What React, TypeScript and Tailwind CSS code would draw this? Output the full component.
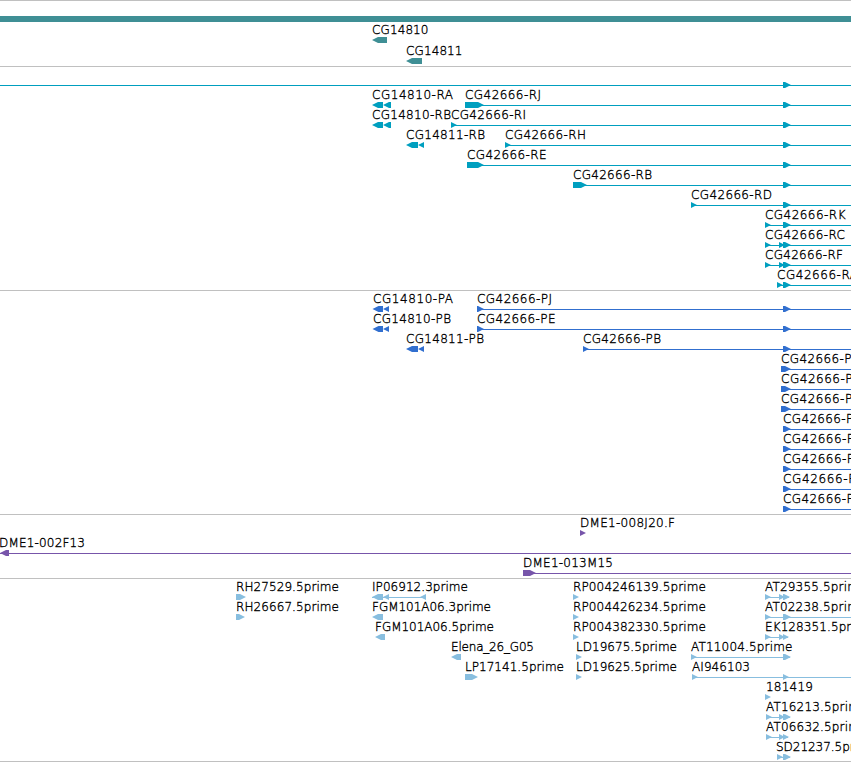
type Label = { text: string; x: number; end: number };
type Arrow = { from: number; to: number; left?: boolean };
type Row = { labels?: Label[]; lines?: [number, number][]; arrows?: Arrow[] };

const WIDTH = 851;

const lab = (text: string, x: number, end: number): Label => ({ text, x, end });
const r = (from: number, to: number): Arrow => ({ from, to });
const l = (from: number, to: number): Arrow => ({ from, to, left: true });

const EXON = r(783, 791);

const transcripts: Row[] = [
  { lines: [[0, WIDTH]], arrows: [EXON] },
  {
    labels: [lab("CG14810-RA", 372, 453), lab("CG42666-RJ", 465, 541)],
    lines: [[465, WIDTH]],
    arrows: [l(372, 383), l(383, 391), r(465, 484), EXON],
  },
  {
    labels: [lab("CG14810-RB", 372, 451), lab("CG42666-RI", 451, 526)],
    lines: [[451, WIDTH]],
    arrows: [l(372, 383), l(383, 391), r(451, 457), EXON],
  },
  {
    labels: [lab("CG14811-RB", 406, 485), lab("CG42666-RH", 505, 586)],
    lines: [[505, WIDTH]],
    arrows: [l(406, 418), l(418, 424), r(505, 511), EXON],
  },
  { labels: [lab("CG42666-RE", 467, 546.5)], lines: [[467, WIDTH]], arrows: [r(467, 484), EXON] },
  { labels: [lab("CG42666-RB", 573, 652)], lines: [[573, WIDTH]], arrows: [r(573, 587), EXON] },
  { labels: [lab("CG42666-RD", 691, 772)], lines: [[691, WIDTH]], arrows: [r(691, 697), EXON] },
  { labels: [lab("CG42666-RK", 765, 845.5)], lines: [[765, WIDTH]], arrows: [r(765, 771), EXON] },
  { labels: [lab("CG42666-RC", 765, 845)], lines: [[765, WIDTH]], arrows: [r(765, 771), r(779, 785), EXON] },
  { labels: [lab("CG42666-RF", 765, 843)], lines: [[765, WIDTH]], arrows: [r(765, 771), r(779, 785), EXON] },
  { labels: [lab("CG42666-RA", 777, 858)], lines: [[777, WIDTH]], arrows: [r(777, 783), EXON] },
];

const proteins: Row[] = [
  {
    labels: [lab("CG14810-PA", 373, 453), lab("CG42666-PJ", 477, 552)],
    lines: [[477, WIDTH]],
    arrows: [l(372.5, 383), l(383, 389), r(477, 484), EXON],
  },
  {
    labels: [lab("CG14810-PB", 373, 451), lab("CG42666-PE", 477, 555.5)],
    lines: [[477, WIDTH]],
    arrows: [l(372.5, 383), l(383, 389), r(477, 484), EXON],
  },
  {
    labels: [lab("CG14811-PB", 406, 484), lab("CG42666-PB", 583, 661)],
    lines: [[583, WIDTH]],
    arrows: [l(406, 418), l(418, 424), r(583, 589), EXON],
  },
  ...["PD", "PK", "PC"].map((s) => ({
    labels: [lab("CG42666-" + s, 781, 861)],
    lines: [[781, WIDTH]] as [number, number][],
    arrows: [r(781, 791)],
  })),
  ...["PF", "PH", "PI", "PA", "PG"].map((s) => ({
    labels: [lab("CG42666-" + s, 783, s === "PI" ? 858 : s === "PF" ? 860.5 : 863.5)],
    lines: [[783, WIDTH]] as [number, number][],
    arrows: [EXON],
  })),
];

const clones: Row[] = [
  { labels: [lab("DME1-008J20.F", 580, 675)], arrows: [r(580, 586)] },
  { labels: [lab("DME1-002F13", -1, 85)], lines: [[0, WIDTH]], arrows: [l(0, 9)] },
  { labels: [lab("DME1-013M15", 523, 613)], lines: [[523, WIDTH]], arrows: [r(523, 536)] },
];

const ests: Row[] = [
  {
    labels: [
      lab("RH27529.5prime", 236, 339),
      lab("IP06912.3prime", 372, 468),
      lab("RP004246139.5prime", 573, 706),
      lab("AT29355.5prime", 765, 866.5),
    ],
    lines: [[372, 426], [765, 789]],
    arrows: [r(236, 246), l(372, 383), l(383, 389), l(420, 426), r(573, 579), r(765, 771), r(779, 785), r(783, 790)],
  },
  {
    labels: [
      lab("RH26667.5prime", 236, 339),
      lab("FGM101A06.3prime", 372, 491),
      lab("RP004426234.5prime", 573, 706),
      lab("AT02238.5prime", 765, 866.5),
    ],
    lines: [[765, WIDTH]],
    arrows: [r(236, 245), l(372, 383), r(573, 579), r(765, 771), EXON],
  },
  {
    labels: [
      lab("FGM101A06.5prime", 375, 494),
      lab("RP004382330.5prime", 573, 706),
      lab("EK128351.5prime", 765, 874),
    ],
    lines: [[765, 788]],
    arrows: [l(375, 385), r(573, 579), r(765, 771), r(779, 785), r(783, 789)],
  },
  {
    labels: [lab("Elena_26_G05", 451, 534), lab("LD19675.5prime", 576, 677), lab("AT11004.5prime", 691, 792.5)],
    lines: [[691, 790]],
    arrows: [l(451, 461), r(576, 582), r(691, 697), EXON],
  },
  {
    labels: [lab("LP17141.5prime", 465, 564), lab("LD19625.5prime", 576, 677), lab("AI946103", 692, 750)],
    lines: [[692, WIDTH]],
    arrows: [r(465, 478), r(576, 582), r(692, 698), r(783, 789)],
  },
  { labels: [lab("181419", 766, 813)], arrows: [r(765, 771)] },
  {
    labels: [lab("AT16213.5prime", 766, 867.5)],
    lines: [[766, 790]],
    arrows: [r(766, 772), r(779, 785), EXON],
  },
  {
    labels: [lab("AT06632.5prime", 766, 867.5)],
    lines: [[766, 788]],
    arrows: [r(766, 772), r(779, 785), r(783, 789)],
  },
  { labels: [lab("SD21237.5prime", 776, 877)], lines: [[777, 790]], arrows: [r(777, 783), EXON] },
];

function arrowPoints({ from, to, left }: Arrow) {
  const head = Math.min(6, to - from);
  return left
    ? `${to},14 ${from + head},14 ${from},17 ${from + head},20 ${to},20`
    : `${from},14 ${to - head},14 ${to},17 ${to - head},20 ${from},20`;
}

function TrackRow({ row, tall }: { row: Row; tall?: boolean }) {
  return (
    <svg width={WIDTH} height={tall ? 21 : 20} className="block shrink-0">
      {row.lines?.map(([a, b], i) => (
        <rect key={i} x={a} y={17} width={b - a} height={1} fill="currentColor" />
      ))}
      {row.arrows?.map((a, i) => (
        <polygon key={i} points={arrowPoints(a)} fill="currentColor" />
      ))}
      {row.labels?.map((t) => (
        <text
          key={t.text + t.x}
          x={t.x}
          y={11}
          textLength={t.end - t.x}
          className="fill-black stroke-black stroke-[0.35px] font-['DejaVu_Sans',sans-serif] text-[12px] font-extralight"
        >
          {t.text}
        </text>
      ))}
    </svg>
  );
}

function Track({ rows, className }: { rows: Row[]; className: string }) {
  return (
    <section className={`flex flex-col border-t border-[#c0c0c0] pt-px ${className}`}>
      {rows.map((row, i) => (
        <TrackRow key={i} row={row} />
      ))}
    </section>
  );
}

export default function App() {
  return (
    <main className="h-[762px] w-[851px] overflow-hidden bg-white">
      <section className="flex h-[66px] flex-col border-t border-[#c0c0c0] pt-[15px] text-[#3f8f95]">
        <div className="mb-px h-1.5 shrink-0 bg-current" />
        <TrackRow tall row={{ labels: [lab("CG14810", 372, 428.5)], arrows: [l(372, 387)] }} />
        <TrackRow tall row={{ labels: [lab("CG14811", 406, 462.5)], arrows: [l(406, 422)] }} />
      </section>
      <Track rows={transcripts} className="h-56 text-[#009fbf]" />
      <Track rows={proteins} className="h-56 text-[#316fcf]" />
      <Track rows={clones} className="h-16 text-[#7755aa]" />
      <Track rows={ests} className="h-[184px] border-b text-[#88bedf]" />
    </main>
  );
}
